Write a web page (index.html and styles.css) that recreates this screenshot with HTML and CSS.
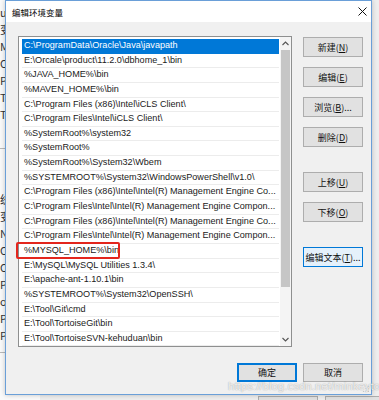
FILE: index.html
```html
<!DOCTYPE html>
<html lang="zh-CN">
<head>
  <meta charset="UTF-8">
  <title>编辑环境变量</title>
  <link rel="stylesheet" href="styles.css">
</head>
<body>
  <!-- parent window peeking out behind the dialog -->
  <div class="behind-left">
    <div class="bl">u</div>
    <div class="bl">变</div>
    <div class="bl">M</div>
    <div class="bl">O</div>
    <div class="bl">Pa</div>
    <div class="bl">TE</div>
    <div class="bl">T</div>
    <div class="bl"></div>
    <div class="bl rule"></div>
    <div class="bl"></div>
    <div class="bl"></div>
    <div class="bl">统</div>
    <div class="bl">变</div>
    <div class="bl">N</div>
    <div class="bl">O</div>
    <div class="bl">O</div>
    <div class="bl">P</div>
    <div class="bl">o</div>
    <div class="bl">P</div>
    <div class="bl">P</div>
    <div class="bl rule"></div>
  </div>
  <div class="behind-btn b1"></div>
  <div class="behind-btn b2"></div>

  <div class="dialog">
    <div class="titlebar">
      <span class="title">编辑环境变量</span>
      <svg class="close" width="9" height="9" viewBox="0 0 9 9">
        <path d="M0.5 0.5 L8.5 8.5 M8.5 0.5 L0.5 8.5" stroke="#111" stroke-width="1" fill="none"/>
      </svg>
    </div>

    <div class="content">
      <div class="main">
        <div class="list">
          <div class="rows">
            <div class="row selected">C:\ProgramData\Oracle\Java\javapath</div>
            <div class="row">E:\Orcale\product\11.2.0\dbhome_1\bin</div>
            <div class="row">%JAVA_HOME%\bin</div>
            <div class="row">%MAVEN_HOME%\bin</div>
            <div class="row">C:\Program Files (x86)\Intel\iCLS Client\</div>
            <div class="row">C:\Program Files\Intel\iCLS Client\</div>
            <div class="row">%SystemRoot%\system32</div>
            <div class="row">%SystemRoot%</div>
            <div class="row">%SystemRoot%\System32\Wbem</div>
            <div class="row">%SYSTEMROOT%\System32\WindowsPowerShell\v1.0\</div>
            <div class="row">C:\Program Files (x86)\Intel\Intel(R) Management Engine Co...</div>
            <div class="row">C:\Program Files\Intel\Intel(R) Management Engine Compon...</div>
            <div class="row">C:\Program Files (x86)\Intel\Intel(R) Management Engine Co...</div>
            <div class="row">C:\Program Files\Intel\Intel(R) Management Engine Compon...</div>
            <div class="row">%MYSQL_HOME%\bin</div>
            <div class="row">E:\MySQL\MySQL Utilities 1.3.4\</div>
            <div class="row">E:\apache-ant-1.10.1\bin</div>
            <div class="row">%SYSTEMROOT%\System32\OpenSSH\</div>
            <div class="row">E:\Tool\Git\cmd</div>
            <div class="row">E:\Tool\TortoiseGit\bin</div>
            <div class="row">E:\Tool\TortoiseSVN-kehuduan\bin</div>
          </div>
          <div class="scrollbar">
            <div class="arrow">
              <svg width="7" height="5" viewBox="0 0 7 5"><path d="M0.5 4 L3.5 1 L6.5 4" stroke="#555" stroke-width="1.1" fill="none"/></svg>
            </div>
            <div class="thumb"></div>
            <div class="arrow down">
              <svg width="7" height="5" viewBox="0 0 7 5"><path d="M0.5 1 L3.5 4 L6.5 1" stroke="#555" stroke-width="1.1" fill="none"/></svg>
            </div>
          </div>
          <div class="mark"></div>
        </div>

        <div class="actions">
          <button class="btn">新建(<u>N</u>)</button>
          <button class="btn">编辑(<u>E</u>)</button>
          <button class="btn">浏览(<u>B</u>)...</button>
          <button class="btn">删除(<u>D</u>)</button>
          <button class="btn spaced">上移(<u>U</u>)</button>
          <button class="btn">下移(<u>O</u>)</button>
          <button class="btn spaced hot">编辑文本(<u>T</u>)...</button>
        </div>
      </div>

      <div class="footer">
        <button class="btn default">确定</button>
        <button class="btn">取消</button>
      </div>
    </div>
    <div class="grip"></div>
  </div>

  <div class="watermark">https://blog.csdn.net/minkeyto</div>
</body>
</html>
```

FILE: styles.css
```css
* { box-sizing: border-box; }
html, body { margin: 0; padding: 0; }
body {
  width: 379px; height: 400px; overflow: hidden; position: relative;
  background: #eeeeee;
  font-family: "Noto Sans CJK SC", "Liberation Sans", sans-serif;
  color: #000;
}

/* background window; the dialog lies over most of it */
.behind-left { position: absolute; left: 0; top: 0; width: 40px; height: 400px; background: #fafafa; padding-top: 4px; }
.bl { height: 17px; line-height: 17px; font-size: 11px; color: #333; white-space: nowrap; }
.bl.rule { height: 1px; margin: 8px 0; background: #b9b9b9; }
.behind-btn { position: absolute; top: 396px; width: 60px; height: 20px; border: 1px solid #adadad; background: #e1e1e1; }
.behind-btn.b1 { left: 258px; }
.behind-btn.b2 { left: 325px; }

/* dialog */
.dialog {
  position: absolute; left: 5px; top: 0; width: 367px; height: 395px;
  border: 1px solid #6a9fd8; background: #f0f0f0;
  display: flex; flex-direction: column;
  box-shadow: 0 0 5px rgba(0, 0, 0, 0.22);
}
.titlebar { height: 21px; flex: none; background: #fff; display: flex; align-items: center; justify-content: space-between; padding: 0 4px 0 6px; }
.title { font-size: 8.5px; letter-spacing: 0; }
.close { display: block; }

.content { flex: 1; padding: 14px 8px 0 12px; display: flex; flex-direction: column; }
.main { display: flex; gap: 11px; }

.list {
  position: relative; width: 274px; height: 311px;
  border: 1px solid #8e8f8f; background: #fff;
  display: flex; padding: 2px 0 0 3px;
}
.rows { flex: 1; margin-right: 1px; min-width: 0; }
.row {
  height: 14.65px; line-height: 13.6px; padding-left: 2px;
  font-family: "Liberation Sans", Arial, sans-serif; font-size: 9.1px; color: #1a1a1a;
  white-space: nowrap; overflow: hidden; text-overflow: ellipsis;
  border-bottom: 1px solid #ececec;
}
.row.selected { background: #0078d7; color: #fff; border-bottom-color: #0078d7; }
.mark { position: absolute; left: -3px; top: 205px; width: 104px; height: 17px; border: 2px solid #e3261d; border-radius: 2px; }

.scrollbar { width: 11px; margin-top: -2px; background: #f4f4f4; display: flex; flex-direction: column; }
.arrow { height: 12px; display: flex; align-items: center; justify-content: center; }
.thumb { height: 237px; margin: 1px 1px 0 1px; background: #c6c6c6; }
.arrow.down { margin-top: auto; height: 14px; }

.actions { display: flex; flex-direction: column; gap: 10px; padding-top: 1px; }
.btn {
  width: 60px; height: 20px; padding: 0;
  border: 1px solid #adadad; background: #e1e1e1;
  font-family: "Noto Sans CJK SC", "Liberation Sans", sans-serif; font-size: 9px; color: #111;
  display: flex; align-items: center; justify-content: center; white-space: nowrap;
}
.btn u { text-decoration-thickness: 1px; text-underline-offset: 1px; }
.btn.spaced { margin-top: 15px; }
.btn.hot { background: #e5f1fb; border-color: #0078d7; }
.btn.default { border-color: #0078d7; box-shadow: inset 0 0 0 1px #0078d7; }

.footer { display: flex; justify-content: flex-end; gap: 6px; margin-top: 16px; }
.footer .btn { height: 19px; }

.grip {
  position: absolute; right: 2px; bottom: 2px; width: 7px; height: 7px;
  background: radial-gradient(circle, #9a9a9a 0.7px, transparent 0.8px) 0 0 / 2.5px 2.5px;
  clip-path: polygon(100% 0, 100% 100%, 0 100%);
}

.watermark {
  position: absolute; left: 228px; top: 380px;
  font-family: "Liberation Sans", Arial, sans-serif; font-size: 11.5px;
  color: rgba(255, 255, 255, 0.8);
  text-shadow: 0 0 1px rgba(0, 0, 0, 0.3), 0 0 2px rgba(0, 0, 0, 0.12);
  white-space: nowrap;
}
```
